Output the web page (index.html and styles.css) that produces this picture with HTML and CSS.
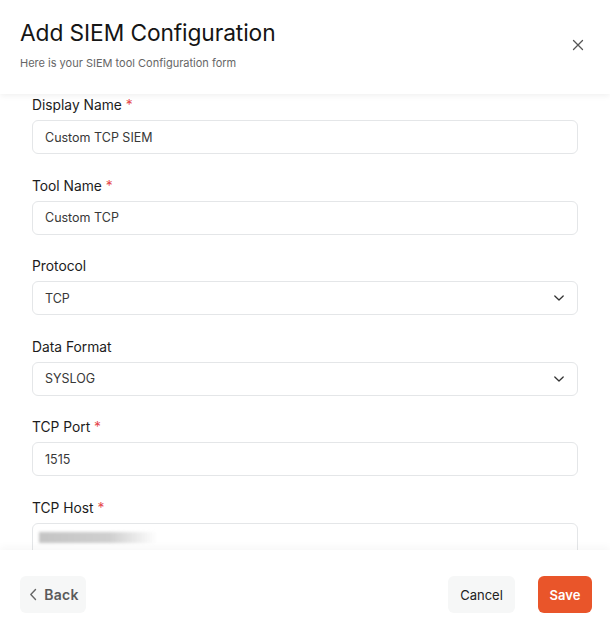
FILE: index.html
```html
<!DOCTYPE html>
<html lang="en">
<head>
<meta charset="utf-8">
<title>Add SIEM Configuration</title>
<link rel="stylesheet" href="styles.css">
</head>
<body>
<div class="modal">
  <header class="modal-header">
    <div class="heading">
      <h1 class="title">Add SIEM Configuration</h1>
      <p class="subtitle">Here is your SIEM tool Configuration form</p>
    </div>
    <button class="close" aria-label="Close">
      <svg width="12" height="12" viewBox="0 0 12 12"><path d="M1.5 1.5 L10.5 10.5 M10.5 1.5 L1.5 10.5" stroke="#555" stroke-width="1.3" stroke-linecap="round" fill="none"/></svg>
    </button>
  </header>
  <main class="modal-body">
    <div class="field">
      <label class="label">Display Name <span class="req">*</span></label>
      <div class="input">Custom TCP SIEM</div>
    </div>
    <div class="field">
      <label class="label">Tool Name <span class="req">*</span></label>
      <div class="input">Custom TCP</div>
    </div>
    <div class="field">
      <label class="label">Protocol</label>
      <div class="input select">TCP
        <svg class="chev" width="12" height="8" viewBox="0 0 12 8"><path d="M1.8 2 L6 6 L10.2 2" stroke="#333" stroke-width="1.3" fill="none" stroke-linecap="round" stroke-linejoin="round"/></svg>
      </div>
    </div>
    <div class="field">
      <label class="label">Data Format</label>
      <div class="input select">SYSLOG
        <svg class="chev" width="12" height="8" viewBox="0 0 12 8"><path d="M1.8 2 L6 6 L10.2 2" stroke="#333" stroke-width="1.3" fill="none" stroke-linecap="round" stroke-linejoin="round"/></svg>
      </div>
    </div>
    <div class="field">
      <label class="label">TCP Port <span class="req">*</span></label>
      <div class="input">1515</div>
    </div>
    <div class="field">
      <label class="label">TCP Host <span class="req">*</span></label>
      <div class="input host"><span class="blurred"></span></div>
    </div>
  </main>
  <footer class="modal-footer">
    <button class="btn btn-back">
      <svg width="8" height="13" viewBox="0 0 8 13"><path d="M6.5 1.5 L1.8 6.5 L6.5 11.5" stroke="#666" stroke-width="1.4" fill="none" stroke-linecap="round" stroke-linejoin="round"/></svg>
      Back
    </button>
    <div class="actions">
      <button class="btn btn-cancel">Cancel</button>
      <button class="btn btn-save">Save</button>
    </div>
  </footer>
</div>
</body>
</html>
```
FILE: styles.css
```css
* { box-sizing: border-box; }
html, body { margin: 0; padding: 0; background: #fff; }
body { font-family: Inter, "Noto Sans", "Liberation Sans", sans-serif; color: #1f1f1f; }

.modal {
  width: 610px;
  height: 632px;
  display: flex;
  flex-direction: column;
  overflow: hidden;
}

.modal-header {
  position: relative;
  z-index: 2;
  height: 94px;
  flex: 0 0 94px;
  display: flex;
  align-items: center;
  justify-content: space-between;
  padding: 0 24px 0 20px;
  background: #fff;
  box-shadow: 0 2px 6px rgba(0, 0, 0, 0.06);
}
.heading { padding-bottom: 4px; }
.title {
  margin: 0;
  font-size: 22.75px;
  font-weight: 400;
  line-height: 28px;
  color: #151515;
  letter-spacing: -0.1px;
}
.subtitle {
  margin: 8px 0 0;
  font-size: 11px;
  line-height: 16px;
  color: #666;
}
.close {
  width: 16px;
  height: 16px;
  padding: 0;
  border: 0;
  background: none;
  display: flex;
  align-items: center;
  justify-content: center;
  margin-top: -4px;
}

.modal-body {
  flex: 1;
  overflow: hidden;
  padding: 1px 32px 0 32px;
}
.field {
  display: flex;
  flex-direction: column;
  gap: 5px;
  margin-bottom: 21.5px;
}
.label {
  font-size: 13.8px;
  line-height: 20px;
  color: #1c1c1c;
}
.req { color: #e5484d; }
.input {
  height: 34px;
  border: 1px solid #e4e6e8;
  border-radius: 6px;
  padding: 0 12px;
  display: flex;
  align-items: center;
  justify-content: space-between;
  font-size: 12.5px;
  color: #383838;
}
.select .chev { margin-right: 0; }
.host { align-items: flex-start; padding-left: 6px; }
.blurred {
  display: block;
  margin-top: 8px;
  width: 118px;
  height: 11px;
  background: linear-gradient(90deg, #c4c4c4 0%, #cfcfcf 60%, rgba(220,220,220,0) 100%);
  filter: blur(1.5px);
}

.modal-footer {
  position: relative;
  z-index: 2;
  flex: 0 0 82px;
  height: 82px;
  display: flex;
  justify-content: space-between;
  align-items: flex-start;
  padding: 26px 18px 0 20px;
  background: #fff;
  box-shadow: 0 -3px 8px rgba(0, 0, 0, 0.035);
}
.actions { display: flex; gap: 23px; }
.btn {
  height: 37px;
  border: 0;
  border-radius: 6px;
  font-family: inherit;
  font-size: 13px;
  display: flex;
  align-items: center;
  justify-content: center;
  cursor: pointer;
}
.btn-back {
  width: 66px;
  gap: 7px;
  background: #f6f7f7;
  color: #5a5a5a;
  font-size: 14px;
  font-weight: 600;
  letter-spacing: 0.3px;
  padding: 0 0 0 2px;
}
.btn-cancel {
  width: 67px;
  background: #f6f7f7;
  color: #222;
}
.btn-save {
  width: 54px;
  background: #e9552a;
  color: #fff;
  font-weight: 600;
}
```
